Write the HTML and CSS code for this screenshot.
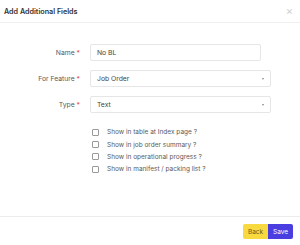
FILE: index.html
```html
<!DOCTYPE html>
<html lang="en">
<head>
  <meta charset="UTF-8">
  <title>Add Additional Fields</title>
  <link rel="stylesheet" href="styles.css">
</head>
<body>
  <div class="modal">
    <div class="modal-header">
      <span class="modal-title">Add Additional Fields</span>
      <span class="close">&times;</span>
    </div>

    <div class="modal-body">
      <div class="form-row">
        <label>Name <span class="req">*</span></label>
        <div class="field field-short">No BL</div>
      </div>
      <div class="form-row">
        <label>For Feature <span class="req">*</span></label>
        <div class="field select">Job Order <span class="caret"></span></div>
      </div>
      <div class="form-row">
        <label>Type <span class="req">*</span></label>
        <div class="field select">Text <span class="caret"></span></div>
      </div>

      <div class="checks">
        <div class="check"><span class="box"></span>Show in table at Index page ?</div>
        <div class="check"><span class="box"></span>Show in job order summary ?</div>
        <div class="check"><span class="box"></span>Show in operational progress ?</div>
        <div class="check"><span class="box"></span>Show in manifest / packing list ?</div>
      </div>
    </div>

    <div class="modal-footer">
      <button class="btn btn-back">Back</button>
      <button class="btn btn-save">Save</button>
    </div>
  </div>
</body>
</html>
```

FILE: styles.css
```css
body {
  margin: 0;
  font-family: 'Inter', sans-serif;
  background: white;
  color: #444;
}

.modal {
  display: flex;
  flex-direction: column;
  height: 245px;
}

.modal-header {
  height: 22px;
  padding: 0 4px;
  display: flex;
  justify-content: space-between;
  align-items: center;
  border-bottom: 1px solid #efefef;
}

.modal-title {
  font-size: 7.2px;
  font-weight: 600;
  color: #333;
}

.close {
  font-size: 11px;
  line-height: 1;
  color: #cfcfcf;
  margin-right: 3px;
}

.modal-body {
  flex: 1;
  padding-top: 21px;
}

.form-row {
  display: grid;
  grid-template-columns: 80px 181px;
  column-gap: 10px;
  align-items: center;
  margin-bottom: 9px;
}

.form-row label {
  text-align: right;
  font-size: 6.8px;
  color: #5a5a5a;
}

.req {
  color: #e2453c;
}

.field {
  height: 17px;
  box-sizing: border-box;
  border: 1px solid #e6e6e6;
  border-radius: 2px;
  padding: 0 6px;
  font-size: 6.8px;
  color: #444;
  display: flex;
  align-items: center;
}

.field-short {
  width: 171px;
}

.select {
  justify-content: space-between;
}

.caret {
  width: 0;
  height: 0;
  border-left: 1.5px solid transparent;
  border-right: 1.5px solid transparent;
  border-top: 2px solid #888;
}

.checks {
  margin: 13px 0 0 92px;
}

.check {
  display: flex;
  align-items: center;
  height: 12.4px;
  font-size: 6.5px;
  color: #5a5a5a;
}

.box {
  width: 5px;
  height: 5px;
  border: 1px solid #999;
  border-radius: 1px;
  margin-right: 8px;
}

.modal-footer {
  border-top: 1px solid #ececec;
  padding: 7px 7px 6px;
  display: flex;
  justify-content: flex-end;
}

.btn {
  height: 15px;
  width: 25px;
  border: none;
  font-family: 'Inter', sans-serif;
  font-size: 6.5px;
  padding: 0;
  cursor: pointer;
}

.btn-back {
  background: #f8d93f;
  color: #6b5c1c;
  border-radius: 2px 0 0 2px;
}

.btn-save {
  background: #4b3ee0;
  color: white;
  border-radius: 0 2px 2px 0;
}
```
